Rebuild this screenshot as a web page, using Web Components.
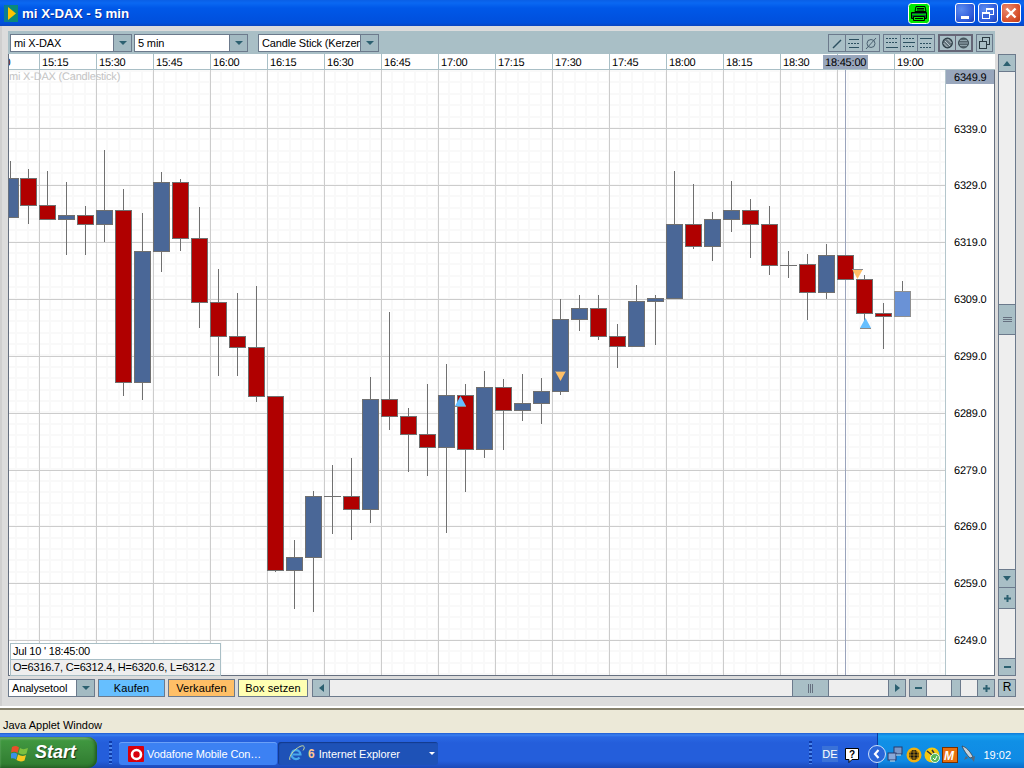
<!DOCTYPE html>
<html>
<head>
<meta charset="utf-8">
<title>mi X-DAX - 5 min</title>
<style>
  html, body { margin: 0; padding: 0; width: 1024px; height: 768px; overflow: hidden; background: #dcdcdc; }
  body { display: flex; flex-direction: column; font: 11px "Liberation Sans", Arial, sans-serif; color: #000; }
</style>
</head>
<body>
<xp-titlebar>mi X-DAX - 5 min</xp-titlebar>
<chart-app>
  <chart-toolbar slot="top"></chart-toolbar>
  <candle-chart slot="chart">
    <ohlc-box date="Jul 10 ' 18:45:00">O=6316.7, C=6312.4, H=6320.6, L=6312.2</ohlc-box>
  </candle-chart>
  <scroll-column slot="side"></scroll-column>
  <chart-footer slot="bottom"></chart-footer>
</chart-app>
<status-strip>Java Applet Window</status-strip>
<xp-taskbar></xp-taskbar>

<script>
const titleTemplate = document.createElement('template');
titleTemplate.innerHTML = `
<style>
  :host { display: flex; align-items: flex-start; height: 26px; flex: none; box-sizing: border-box; padding: 3px 3px 0 4px;
    background: linear-gradient(#0a5fe6 0, #0a68f2 3px, #0058e8 8px, #0052e0 18px, #0050dc 23px, #0a46c0 26px); }
  .icon { width: 14px; height: 17px; margin-top: 2px; }
  .name { margin: 2px 0 0 4px; color: #fff; font: bold 13.3px/17px "Liberation Sans", Arial, sans-serif; text-shadow: 1px 1px 0 #0a2f9c; flex: 1; }
  .printer { width: 22px; height: 21px; margin-right: 22px; }
  .btn { width: 20px; height: 20px; margin-left: 3px; border: 1px solid #fff; border-radius: 3px; box-sizing: border-box; }
  .blue { background: radial-gradient(circle at 30% 30%, #5c8cf0, #2c58d8 70%, #1c3cb0); }
  .red { background: radial-gradient(circle at 30% 30%, #e88a70, #d8502c 65%, #b83a18); }
  svg { display: block; }
</style>
<svg class="icon" viewBox="0 0 14 17"><rect x="0" y="0" width="14" height="17" fill="#0a8a7a"/><path d="M0 0h6v17H0z" fill="#0c7d90"/><path d="M4 2l8 6.500L4 15z" fill="#ffc400"/></svg>
<div class="name"><slot></slot></div>
<svg class="printer" viewBox="0 0 22 21">
  <rect x=".5" y=".5" width="21" height="20" rx="3" fill="#00e800" stroke="#fff"/>
  <path d="M8 3.500h9l1 5H7z" fill="#00e800" stroke="#000"/><path d="M9 5.500h7M9 7h7" stroke="#000"/>
  <path d="M3.500 9.500h15v6h-15z" fill="#063" stroke="#000"/><path d="M4 11.500h14" stroke="#0c0"/><path d="M5.500 13.500h11v4h-11z" fill="#00e800" stroke="#000"/><path d="M7 15.500h8" stroke="#000"/>
</svg>
<div class="btn blue"><svg width="18" height="18"><rect x="5" y="12" width="8" height="3" fill="#fff"/></svg></div>
<div class="btn blue"><svg width="18" height="18" fill="none" stroke="#fff"><rect x="7.500" y="4.500" width="7" height="6" stroke-width="1"/><path d="M7 5h8" stroke-width="2"/><rect x="3.500" y="8.500" width="7" height="6" fill="#3a66de"/><path d="M3 9h8" stroke-width="2"/></svg></div>
<div class="btn red"><svg width="18" height="18" stroke="#fff" stroke-width="2.400"><path d="M4.500 4.500l9 9M13.500 4.500l-9 9"/></svg></div>
`;
class XpTitlebar extends HTMLElement {
  constructor() {
    super();
    this.attachShadow({ mode: 'open' }).appendChild(titleTemplate.content.cloneNode(true));
  }
}
customElements.define('xp-titlebar', XpTitlebar);

const appTemplate = document.createElement('template');
appTemplate.innerHTML = `
<style>
  :host { display: grid; flex: none; height: 680px; box-sizing: border-box; padding: 5px 8px 0 8px; grid-template-columns: 987px 18px; grid-template-rows: 23px 622px 18px; column-gap: 3px; row-gap: 0;
    background: #dcdcdc; box-shadow: inset 2px 0 0 #cfcfcf; align-content: start; }
  ::slotted([slot="top"]) { grid-column: 1; grid-row: 1; }
  ::slotted([slot="chart"]) { grid-column: 1; grid-row: 2; }
  ::slotted([slot="side"]) { grid-column: 2; grid-row: 2; }
  ::slotted([slot="bottom"]) { grid-column: 1 / span 2; grid-row: 3; margin-top: 3px; }
</style>
<slot name="top"></slot><slot name="chart"></slot><slot name="side"></slot><slot name="bottom"></slot>
`;
class ChartApp extends HTMLElement {
  constructor() {
    super();
    this.attachShadow({ mode: 'open' }).appendChild(appTemplate.content.cloneNode(true));
  }
}
customElements.define('chart-app', ChartApp);

const comboTemplate = document.createElement('template');
comboTemplate.innerHTML = `
<style>
  :host { display: flex; box-sizing: border-box; height: 18px; border: 1px solid #6c7a8c; background: #fff; flex: none; }
  .text { flex: 1; min-width: 0; overflow: hidden; white-space: nowrap; padding: 1px 0 0 3px; font: 11px/15px "Liberation Sans", Arial, sans-serif; letter-spacing: -.15px; color: #000; }
  .arrow { flex: none; width: 17px; background: #a3bac2; border-left: 1px solid #6c7a8c; display: flex; align-items: center; justify-content: center; }
  .arrow i { border: 4px solid transparent; border-top: 4px solid #2c6070; border-bottom: 0; width: 0; height: 0; }
</style>
<div class="text"><slot></slot></div><div class="arrow"><i></i></div>
`;
class ComboBox extends HTMLElement {
  constructor() {
    super();
    this.attachShadow({ mode: 'open' }).appendChild(comboTemplate.content.cloneNode(true));
  }
}
customElements.define('combo-box', ComboBox);

const toolTemplate = document.createElement('template');
toolTemplate.innerHTML = `
<style>
  :host { display: flex; height: 100%; box-sizing: border-box; padding: 3px 2px 2px 2px; background: #a9bfc6; align-items: stretch; }
  .groups { display: flex; margin-left: auto; }
  .group { display: flex; margin-left: 3px; border: 1px solid #6c7a8c; }
  .group.dark { border: 2px solid #667; }
  .group span { display: block; width: 16px; border-left: 1px solid #6c7a8c; }
  .group span:first-child { border-left: 0; }
  .group svg { display: block; width: 16px; height: 16px; }
  .group.dark span { width: 15px; border-left-width: 1px; border-left-color: #667; }
  .group.dark span:first-child { border-left: 0; }
  .group.dark svg { width: 15px; height: 14px; }
  .group.single span { width: 15px; }
  .group.single svg { width: 15px; }
  combo-box + combo-box { margin-left: 2px; }
  combo-box.far { margin-left: 10px; }
</style>
<combo-box style="width:122px">mi X-DAX</combo-box>
<combo-box style="width:114px">5 min</combo-box>
<combo-box class="far" style="width:121px">Candle Stick (Kerzen)</combo-box>
<div class="groups">
  <div class="group">
    <span><svg viewBox="0 0 16 16" stroke="#2c5060" fill="none"><path d="M4 13L12 5" stroke-width="1.400"/></svg></span>
    <span><svg viewBox="0 0 16 16" stroke="#2c5060" fill="none"><path d="M3 4.500h10M3 12.500h10"/><path d="M2 8.500h12" stroke-dasharray="2 1"/></svg></span>
    <span><svg viewBox="0 0 16 16" stroke="#4a6070" fill="none"><circle cx="8" cy="8.500" r="4"/><path d="M3 14L13 3"/></svg></span>
  </div>
  <div class="group">
    <span><svg viewBox="0 0 16 16" stroke="#2c5060" fill="none"><path d="M2 3.500h12M2 7.500h12" stroke-dasharray="2 1"/><path d="M2 12.500h12"/></svg></span>
    <span><svg viewBox="0 0 16 16" stroke="#2c5060" fill="none"><path d="M2 3.500h12M2 11.500h12" stroke-dasharray="2 1"/><path d="M2 7.500h12"/></svg></span>
    <span><svg viewBox="0 0 16 16" stroke="#2c5060" fill="none"><path d="M2 3.500h12"/><path d="M2 8.500h12M2 12.500h12" stroke-dasharray="2 1"/></svg></span>
  </div>
  <div class="group dark">
    <span><svg viewBox="0 0 15 14"><circle cx="7.500" cy="7" r="4.800" fill="#66767e" stroke="#2a3a42" stroke-width="1.200"/><path d="M5 5l5 5M7.500 3l4 4M3.500 7l4 4" stroke="#cfdde0" stroke-width=".8"/></svg></span>
    <span><svg viewBox="0 0 15 14"><circle cx="7.500" cy="7" r="5" fill="#55656d" stroke="#3a4a52"/><path d="M4 4.500h7M3 7h9M4 9.500h7" stroke="#a9bfc6" stroke-width=".7"/></svg></span>
  </div>
  <div class="group single">
    <span><svg viewBox="0 0 15 16" fill="none" stroke="#2a3a42"><rect x="5.500" y="2.500" width="7" height="7"/><rect x="2.500" y="6.500" width="7" height="7" fill="#a9bfc6"/></svg></span>
  </div>
</div>
`;
class ChartToolbar extends HTMLElement {
  constructor() {
    super();
    this.attachShadow({ mode: 'open' }).appendChild(toolTemplate.content.cloneNode(true));
  }
}
customElements.define('chart-toolbar', ChartToolbar);

// [open top y, body bottom y, wick high y, wick low y, colour]
const R = 'r', B = 'b';
const candles = [
  [178, 217, 161, 217, B], [178, 205, 169, 224, R], [205, 219, 171, 219, R], [215, 219, 182, 255, B],
  [215, 224, 206, 255, R], [210, 224, 150, 242, B], [210, 382, 189, 396, R], [251, 382, 213, 400, B],
  [182, 251, 172, 272, B], [182, 238, 179, 251, R], [238, 302, 207, 328, R], [302, 336, 269, 376, R],
  [336, 347, 293, 376, R], [347, 396, 286, 402, R], [396, 570, 396, 572, R], [557, 570, 540, 609, B],
  [496, 557, 491, 612, B], [496, 496, 465, 534, 'd'], [496, 509, 458, 540, R], [399, 509, 377, 523, B],
  [399, 416, 312, 430, R], [416, 434, 408, 472, R], [434, 447, 384, 476, R], [395, 447, 364, 533, B],
  [395, 449, 384, 492, R], [387, 449, 371, 458, B], [387, 410, 379, 450, R], [403, 410, 374, 421, B],
  [391, 403, 378, 424, B], [319, 391, 299, 395, B], [308, 319, 295, 331, B], [308, 336, 295, 340, R],
  [336, 346, 324, 368, R], [301, 346, 285, 346, B], [298, 301, 295, 345, B], [224, 298, 171, 298, B],
  [224, 246, 184, 249, R], [219, 246, 212, 261, B], [210, 219, 181, 232, B], [210, 224, 199, 258, R],
  [224, 265, 206, 275, R], [265, 265, 251, 278, 'd'], [264, 292, 254, 320, R], [255, 292, 244, 299, B],
  [255, 279, 255, 279, R], [279, 313, 275, 329, R], [313, 316, 303, 349, R], [291, 316, 281, 317, 'l'],
];

function buildChart() {
  let s = '';
  const font = 'font-family="Liberation Sans, Arial, sans-serif" font-size="11" letter-spacing="-.2"';
  // minor grid
  for (let x = 39 - 57; x < 945; x += 11.4) s += `<path d="M${Math.round(x)} 70V675" stroke="#f9f9f9" stroke-width="2"/>`;
  for (let y = 71; y < 675; y += 11.38) s += `<path d="M9 ${Math.round(y)}H945" stroke="#f9f9f9" stroke-width="2"/>`;
  // major grid
  const hLines = [128, 185, 242, 299, 356, 413, 470, 526, 583, 640];
  hLines.forEach((y) => { s += `<path d="M9 ${y + .5}H945" stroke="#cccccc"/>`; });
  for (let x = 39; x < 945; x += 57) s += `<path d="M${x + .5} 70V675" stroke="#cccccc"/>`;
  // time axis
  s += '<rect x="8" y="54" width="987" height="15" fill="#fff"/><path d="M8 69.500H995" stroke="#a9bfc6"/>';
  const times = ['15:15', '15:30', '15:45', '16:00', '16:15', '16:30', '16:45', '17:00', '17:15', '17:30', '17:45', '18:00', '18:15', '18:30', '', '19:00'];
  s += `<text x="-16" y="66" ${font}>15:00</text>`;
  times.forEach((t, i) => {
    const x = 39 + i * 57;
    s += `<path d="M${x + .5} 54V69" stroke="#a9bfc6"/>`;
    if (t) s += `<text x="${x + 3}" y="66" ${font}>${t}</text>`;
  });
  s += `<rect x="823" y="55" width="45" height="14" fill="#98a6bc"/><text x="825" y="66" ${font}>18:45:00</text>`;
  // watermark
  s += `<text x="9" y="80" ${font} fill="#c4c4c4">mi X-DAX (Candlestick)</text>`;
  // crosshair
  s += '<path d="M845.500 70V675" stroke="#9aa4bc"/>';
  // candles
  candles.forEach((c, i) => {
    const x = i === 0 ? 10 : i === 1 ? 28 : 47 + 19 * (i - 2);
    s += `<path d="M${x + .5} ${c[2]}V${c[3]}" stroke="#707070"/>`;
    if (c[4] === 'd') {
      s += `<path d="M${x - 8} ${c[0] + .5}H${x + 9}" stroke="#707070"/>`;
    } else {
      const fill = c[4] === R ? '#b00000' : c[4] === B ? '#4a6797' : '#6a92d6';
      const stroke = c[4] === 'l' ? '#909090' : '#707070';
      s += `<rect x="${x - 7.5}" y="${c[0] + .5}" width="16" height="${c[1] - c[0]}" fill="${fill}" stroke="${stroke}"/>`;
    }
  });
  // signal markers
  const down = (x, y) => `<path d="M${x} ${y}h11l-5.500 10z" fill="#ffbf66" shape-rendering="auto"/><path d="M${x} ${y + .5}h11" stroke="#8a8a8a"/>`;
  const up = (x, y) => `<path d="M${x} ${y + 10}h11l-5.500 -10z" fill="#66bfff" shape-rendering="auto"/><path d="M${x} ${y + 10.5}h11" stroke="#8a8a8a"/>`;
  s += down(555, 371) + down(852, 269) + up(455, 396) + up(860, 318);
  // price scale
  s += '<rect x="945" y="70" width="50" height="606" fill="#fff"/><path d="M945.500 70V676" stroke="#b4c6cc"/>';
  s += `<rect x="946" y="70" width="48" height="14" fill="#98a6bc"/><text x="954" y="81" ${font}>6349.9</text>`;
  [6339, 6329, 6319, 6309, 6299, 6289, 6279, 6269, 6259, 6249].forEach((p, i) => {
    s += `<text x="954" y="${[133, 189, 246, 303, 360, 417, 474, 530, 587, 644][i]}" ${font}>${p}.0</text>`;
  });
  // frame
  s += '<path d="M8.500 54V675.500H994.500V70" fill="none" stroke="#667080"/>';
  return s;
}

const chartTemplate = document.createElement('template');
chartTemplate.innerHTML = `
<style>
  :host { display: block; position: relative; background: #fff; overflow: hidden; }
  svg { display: block; shape-rendering: crispEdges; text-rendering: geometricPrecision; }
  ::slotted(ohlc-box) { position: absolute; left: 2px; top: 589px; }
</style>
<svg width="987" height="622" viewBox="8 54 987 622" xmlns="http://www.w3.org/2000/svg">${buildChart()}</svg>
<slot></slot>
`;
class CandleChart extends HTMLElement {
  constructor() {
    super();
    this.attachShadow({ mode: 'open' }).appendChild(chartTemplate.content.cloneNode(true));
  }
}
customElements.define('candle-chart', CandleChart);

const ohlcTemplate = document.createElement('template');
ohlcTemplate.innerHTML = `
<style>
  :host { display: block; width: 211px; box-sizing: border-box; border: 1px solid #a9bfc6; font: 11px/15px "Liberation Sans", Arial, sans-serif; letter-spacing: -.2px; color: #000; }
  .date { height: 15px; background: #fff; padding-left: 2px; border-bottom: 1px solid #a9bfc6; }
  .vals { height: 15px; background: #eee; padding-left: 2px; white-space: nowrap; }
</style>
<div class="date"></div>
<div class="vals"><slot></slot></div>
`;
class OhlcBox extends HTMLElement {
  constructor() {
    super();
    this.attachShadow({ mode: 'open' }).appendChild(ohlcTemplate.content.cloneNode(true));
    this.shadowRoot.querySelector('.date').textContent = this.getAttribute('date');
  }
}
customElements.define('ohlc-box', OhlcBox);

const scrollTemplate = document.createElement('template');
scrollTemplate.innerHTML = `
<style>
  :host { display: flex; flex-direction: column; height: 622px; box-sizing: border-box; border: 1px solid #6c7a8c; background: #eee; }
  .b { flex: none; height: 17px; background: #a9bfc6; display: flex; align-items: center; justify-content: center; box-sizing: border-box; }
  .track { flex: none; }
  .thumb { flex: none; height: 31px; background: #a9bfc6; border-top: 1px solid #6c7a8c; border-bottom: 1px solid #6c7a8c; box-sizing: border-box; display: flex; align-items: center; justify-content: center; }
  .mid { flex: 1; }
  .line { border-top: 1px solid #6c7a8c; }
  .lineb { border-bottom: 1px solid #6c7a8c; }
  svg { display: block; }
</style>
<div class="b lineb"><svg width="8" height="5"><path d="M4 0l4 5H0z" fill="#2c6070"/></svg></div>
<div class="track" style="height:232px"></div>
<div class="thumb"><svg width="9" height="7" stroke="#667080"><path d="M0 1.500h9M0 3.500h9M0 5.500h9"/></svg></div>
<div class="track" style="height:234px"></div>
<div class="b line lineb" style="height:19px"><svg width="8" height="5"><path d="M4 5l4-5H0z" fill="#2c6070"/></svg></div>
<div class="b lineb" style="height:21px"><svg width="7" height="7" stroke="#2c6070" stroke-width="2"><path d="M0 3.500h7M3.500 0v7"/></svg></div>
<div class="mid"></div>
<div class="b line"><svg width="7" height="2"><rect width="7" height="2" fill="#2c6070"/></svg></div>
`;
class ScrollColumn extends HTMLElement {
  constructor() {
    super();
    this.attachShadow({ mode: 'open' }).appendChild(scrollTemplate.content.cloneNode(true));
  }
}
customElements.define('scroll-column', ScrollColumn);

const footerTemplate = document.createElement('template');
footerTemplate.innerHTML = `
<style>
  :host { display: flex; height: 18px; font: 11px "Liberation Sans", Arial, sans-serif; }
  .act { flex: none; box-sizing: border-box; border: 1px solid #6c7a8c; text-align: center; line-height: 16px; margin-left: 3px; width: 67px; letter-spacing: .1px; }
  .hs, .zm { flex: none; display: flex; box-sizing: border-box; border: 1px solid #6c7a8c; background: #eee; }
  .hs { width: 594px; margin-left: 4px; }
  .zm { width: 86px; margin-left: 3px; }
  .b { flex: none; width: 17px; background: #a9bfc6; display: flex; align-items: center; justify-content: center; box-sizing: border-box; }
  .r { border-left: 1px solid #6c7a8c; }
  .l { border-right: 1px solid #6c7a8c; }
  .t { flex: none; background: #a9bfc6; display: flex; align-items: center; justify-content: center; box-sizing: border-box; border-left: 1px solid #6c7a8c; border-right: 1px solid #6c7a8c; }
  .rbtn { flex: none; width: 18px; margin-left: 3px; box-sizing: border-box; border: 1px solid #6c7a8c; background: #a9bfc6; text-align: center; line-height: 15px; font-size: 12px; }
  svg { display: block; }
</style>
<combo-box style="width:87px">Analysetool</combo-box>
<div class="act" style="background:#66bfff">Kaufen</div>
<div class="act" style="background:#ffbf66">Verkaufen</div>
<div class="act" style="background:#ffffb3;width:70px">Box setzen</div>
<div class="hs">
  <div class="b l"><svg width="5" height="8"><path d="M0 4l5-4v8z" fill="#2c6070"/></svg></div>
  <div style="width:462px"></div>
  <div class="t" style="width:37px"><svg width="7" height="9" stroke="#667080"><path d="M1.500 0v9M3.500 0v9M5.500 0v9"/></svg></div>
  <div style="flex:1"></div>
  <div class="b r"><svg width="5" height="8"><path d="M5 4L0 0v8z" fill="#2c6070"/></svg></div>
</div>
<div class="zm">
  <div class="b l"><svg width="7" height="2"><rect width="7" height="2" fill="#2c6070"/></svg></div>
  <div style="width:24px"></div>
  <div class="t" style="width:10px"></div>
  <div style="flex:1"></div>
  <div class="b r"><svg width="7" height="7" stroke="#2c6070" stroke-width="2"><path d="M0 3.500h7M3.500 0v7"/></svg></div>
</div>
<div class="rbtn">R</div>
`;
class ChartFooter extends HTMLElement {
  constructor() {
    super();
    this.attachShadow({ mode: 'open' }).appendChild(footerTemplate.content.cloneNode(true));
  }
}
customElements.define('chart-footer', ChartFooter);

const statusTemplate = document.createElement('template');
statusTemplate.innerHTML = `
<style>
  :host { display: block; flex: none; height: 27px; box-sizing: border-box; background: #fff; padding-top: 2px; }
  .strip { height: 25px; box-sizing: border-box; background: #ece9d8; border-top: 2px solid #85806c; padding: 8px 0 0 3px; font: 11px/14px "Liberation Sans", Arial, sans-serif; color: #000; }
</style>
<div class="strip"><slot></slot></div>
`;
class StatusStrip extends HTMLElement {
  constructor() {
    super();
    this.attachShadow({ mode: 'open' }).appendChild(statusTemplate.content.cloneNode(true));
  }
}
customElements.define('status-strip', StatusStrip);

const taskTemplate = document.createElement('template');
taskTemplate.innerHTML = `
<style>
  :host { display: flex; flex: 1; align-items: flex-end; box-sizing: border-box;
    background: linear-gradient(#1e5bd0 0, #3a80f0 2px, #2a68e4 4px, #245edb 10px, #245edb 28px, #1c49b8 35px); font: 11px "Liberation Sans", Arial, sans-serif; color: #fff; }
  .start { flex: none; width: 97px; height: 31px; box-sizing: border-box; border-radius: 0 9px 9px 0; display: flex; align-items: center; padding-left: 11px;
    background: linear-gradient(#4a9a4a 0, #3f963f 15%, #3a8a3a 50%, #317f31 85%, #2a6a2a 100%); box-shadow: inset -2px 0 3px #1f5a1f, inset 0 2px 2px #7ec07e; font: italic bold 18px "Liberation Sans", Arial, sans-serif; text-shadow: 1px 1px 1px #1a3a1a; }
  .start svg { margin-right: 6px; }
  .grip { flex: none; width: 3px; height: 23px; margin: 0 7px 4px 12px; background: repeating-linear-gradient(#0f3aa8 0 2px, #4a86ee 2px 4px); }
  .task { flex: none; height: 23px; margin-bottom: 3px; box-sizing: border-box; border-radius: 3px; display: flex; align-items: center; white-space: nowrap; }
  .voda { width: 158px; background: #3c81f3; padding-left: 9px; box-shadow: inset 0 1px 0 #6aa0f8; letter-spacing: -.1px; }
  .voda svg { margin-right: 3px; }
  .ie { width: 160px; margin-left: 1px; background: #1e52b7; padding-left: 10px; box-shadow: inset 1px 1px 1px #123a8c; }
  .ie b { color: #ffc890; margin: 0 4px 0 3px; font-size: 12px; }
  .ie .dd { margin-left: auto; margin-right: 3px; border: 3px solid transparent; border-top: 3px solid #fff; border-bottom: 0; }
  .spacer { flex: 1; }
  .grip.two { margin: 0 0 4px 0; }
  .de { flex: none; width: 16px; height: 16px; margin: 0 7px 6px 10px; background: #3a72d8; text-align: center; line-height: 16px; font-size: 11px; }
  .help { flex: none; margin: 0 18px 5px 0; }
  .tray { flex: none; width: 147px; height: 35px; box-sizing: border-box; position: relative; display: flex; align-items: flex-end; padding: 0 0 5px 9px;
    background: linear-gradient(#0e7ad8 0, #19a0f0 3px, #1090e6 8px, #0f8ae4 28px, #0a6cc8 35px); border-left: 1px solid #0b3aa0; }
  .tray svg { flex: none; margin-right: 2px; }
  .chev { position: absolute; left: -10px; bottom: 5px; width: 18px; height: 18px; margin: 0; }
  .clock { margin-left: auto; margin-right: 13px; margin-bottom: 2px; font-size: 11px; }
</style>
<div class="start">
  <svg width="18" height="18" viewBox="0 0 18 18"><path d="M1 3c3-1.500 5-1 7 .5L6.500 9C4.500 7.500 2.500 7.500 0 8.500z" fill="#e8502a"/><path d="M9 4c2 1.500 4.500 1.500 8 0l-1.500 5.500c-3 1.500-5.500 1-8-.5z" fill="#7cc040"/><path d="M0 9.500c2.500-1 4.500-1 6.300.5L5 15.500c-2-1.500-4-1.500-6.500-.5z" fill="#3a90e8"/><path d="M7 10.500c2.500 1.500 5 2 8 .5l-1.500 5.500c-3 1.500-5.500 1-8-.5z" fill="#f8c820"/></svg>
  Start
</div>
<div class="grip"></div>
<div class="task voda">
  <svg width="16" height="16" viewBox="0 0 16 16"><rect width="16" height="16" rx="1" fill="#d8000c"/><circle cx="8.500" cy="8.500" r="4.500" fill="none" stroke="#fff" stroke-width="2.600"/></svg>
  Vodafone Mobile Con…
</div>
<div class="task ie">
  <svg width="17" height="17" viewBox="0 0 17 17" fill="none"><path d="M5 9.500h7.500A4.500 4.500 0 1 0 11.500 12.500" stroke="#48a8ec" stroke-width="2.200"/><path d="M2 15c-1.500-2 2-8 6-11s7-4 8-2.500-1 4-1 4" stroke="#c8d8a0" stroke-width="1"/></svg>
  <b>6</b>Internet Explorer
  <i class="dd"></i>
</div>
<div class="spacer"></div>
<div class="grip two"></div>
<div class="de">DE</div>
<svg class="help" width="14" height="15" viewBox="0 0 14 15"><path d="M.5.5h13v11H7l-3 3v-3H.5z" fill="#fff" stroke="#000"/><text x="4" y="10" font-family="Liberation Sans, Arial, sans-serif" font-size="10" font-weight="bold" fill="#000">?</text></svg>
<div class="tray">
  <svg class="chev" viewBox="0 0 18 18"><circle cx="9" cy="9" r="8.500" fill="#2a66d8" stroke="#cfe0fa"/><path d="M10.500 5L7 9l3.500 4" fill="none" stroke="#fff" stroke-width="2.200"/></svg>
  <svg width="16" height="17" viewBox="0 0 16 17" style="margin-right:3px"><rect x="7" y="1" width="8" height="7" fill="#7a98c8" stroke="#2a3a6a"/><rect x="1" y="7" width="8" height="7" fill="#8aa8d8" stroke="#2a3a6a"/><path d="M3 15h5M9 9h5" stroke="#ddd"/></svg>
  <svg width="16" height="16" viewBox="0 0 16 16"><circle cx="8" cy="8" r="7.500" fill="#f0b010"/><circle cx="8" cy="8" r="5" fill="#111"/><path d="M3 8h10M8 3v10M4 5h8M4 11h8M5.500 3.500c-2 3-2 6 0 9M10.500 3.500c2 3 2 6 0 9" stroke="#f0b010" stroke-width=".6" fill="none"/></svg>
  <svg width="16" height="16" viewBox="0 0 16 16"><circle cx="8" cy="8" r="7.500" fill="#f4c810"/><path d="M3 4l5 4M8 3l2 3" stroke="#333" stroke-width="1.500"/><circle cx="11" cy="11" r="4.500" fill="#58b858" stroke="#e8f8e8"/><path d="M9 11l2 2 2-4" stroke="#fff" fill="none"/></svg>
  <svg width="16" height="16" viewBox="0 0 16 16" style="margin-right:3px"><rect x=".5" y=".5" width="15" height="15" fill="#e87010" stroke="#7a3000"/><text x="2" y="13" font-family="Liberation Sans, Arial, sans-serif" font-size="12" font-weight="bold" font-style="italic" fill="#fff">M</text></svg>
  <svg width="16" height="18" viewBox="0 0 16 18"><path d="M1 1c4 1 8 5 11 11l-3 1C6 10 3 6 1 1z" fill="#c8d0d8" stroke="#303840" stroke-width=".7"/><path d="M5 11l-2 4 4-2M10 13l3 4 1-6z" fill="#5a6878"/></svg>
  <span class="clock">19:02</span>
</div>
`;
class XpTaskbar extends HTMLElement {
  constructor() {
    super();
    this.attachShadow({ mode: 'open' }).appendChild(taskTemplate.content.cloneNode(true));
  }
}
customElements.define('xp-taskbar', XpTaskbar);
</script>
</body>
</html>
